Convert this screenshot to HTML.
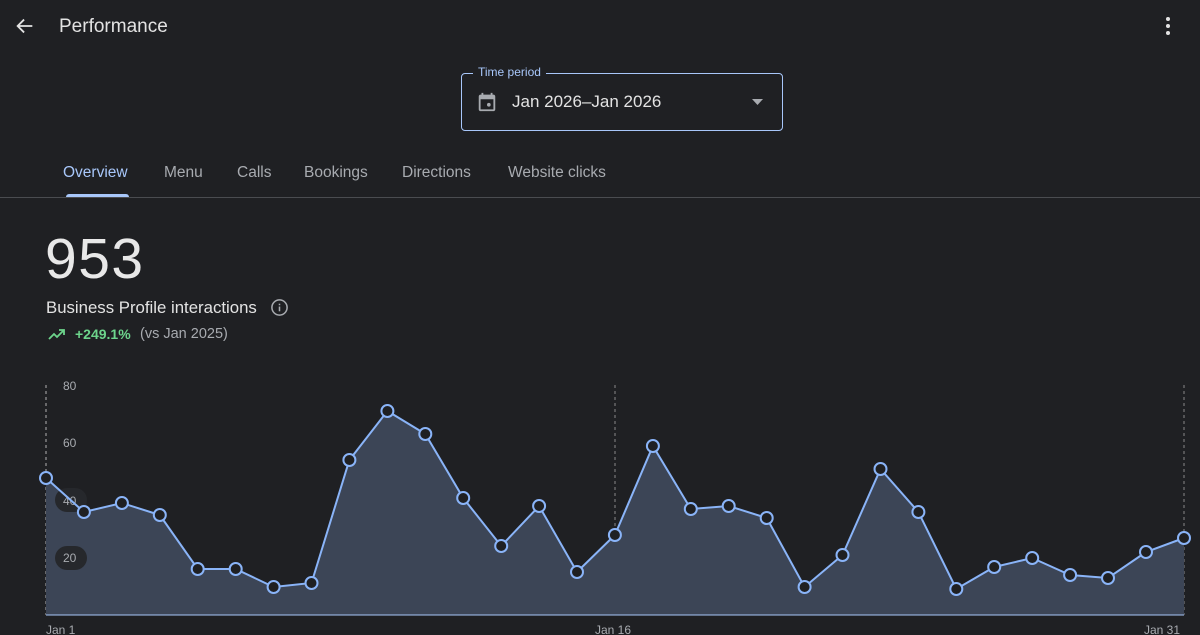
<!DOCTYPE html>
<html><head><meta charset="utf-8"><style>
*{margin:0;padding:0;box-sizing:border-box}
body{width:1200px;height:635px;overflow:hidden;background:#1f2023;font-family:"Liberation Sans",Arial,sans-serif;color:#e3e3e3;position:relative}
.abs{position:absolute}
.tab{position:absolute;top:164px;font-size:15.5px;color:#a8abb0}
</style></head><body>
<svg class="abs" style="left:14px;top:15px" width="22" height="22" viewBox="0 0 24 24"><path d="M20 12H5M11 5l-7 7 7 7" stroke="#e3e3e3" stroke-width="2" fill="none"/></svg>
<div class="abs" style="left:59px;top:16px;font-size:19px;color:#e3e3e3">Performance</div>
<svg class="abs" style="left:1158px;top:15px" width="20" height="22" viewBox="0 0 20 22"><circle cx="10" cy="4" r="2" fill="#e3e3e3"/><circle cx="10" cy="11" r="2" fill="#e3e3e3"/><circle cx="10" cy="18" r="2" fill="#e3e3e3"/></svg>

<div class="abs" style="left:461px;top:73px;width:322px;height:58px;border:1px solid #a8c7fa;border-radius:4px"></div>
<div class="abs" style="left:473px;top:65px;padding:0 5px;background:#1f2023;font-size:12px;color:#a8c7fa">Time period</div>
<svg class="abs" style="left:476px;top:91px" width="22" height="22" viewBox="0 0 24 24"><path d="M19 4h-1V2h-2v2H8V2H6v2H5c-1.1 0-2 .9-2 2v14c0 1.1.9 2 2 2h14c1.1 0 2-.9 2-2V6c0-1.1-.9-2-2-2zm0 16H5V9h14v11z" fill="#a8abb0"/><rect x="12" y="13" width="4" height="4" rx="2" fill="#a8abb0"/></svg>
<div class="abs" style="left:512px;top:92px;font-size:17px;color:#e3e3e3">Jan 2026–Jan 2026</div>
<svg class="abs" style="left:751px;top:98px" width="14" height="8"><path d="M1 1h11L6.5 7z" fill="#a8abb0"/></svg>

<div class="tab" style="left:63px;color:#a8c7fa">Overview</div>
<div class="tab" style="left:164px">Menu</div>
<div class="tab" style="left:237px">Calls</div>
<div class="tab" style="left:304px">Bookings</div>
<div class="tab" style="left:402px">Directions</div>
<div class="tab" style="left:508px">Website clicks</div>
<div class="abs" style="left:66px;top:194px;width:63px;height:3px;background:#a8c7fa;border-radius:3px 3px 0 0"></div>
<div class="abs" style="left:0;top:197px;width:1200px;height:1px;background:#4a4c50"></div>

<div class="abs" style="left:45px;top:226px;font-size:57px;font-weight:300;color:#e8e8e8;letter-spacing:1.5px">953</div>
<div class="abs" style="left:46px;top:298px;font-size:16.8px;color:#e3e3e3">Business Profile interactions</div>
<svg class="abs" style="left:270px;top:298px" width="19" height="19" viewBox="0 0 20 20"><circle cx="10" cy="10" r="8" stroke="#a8abb0" stroke-width="1.6" fill="none"/><rect x="9.2" y="9" width="1.6" height="5" fill="#a8abb0"/><rect x="9.2" y="6" width="1.6" height="1.6" fill="#a8abb0"/></svg>
<svg class="abs" style="left:48px;top:327px" width="18" height="14" viewBox="0 0 18 14"><path d="M1 12l5-5 3 3 6-6M11 3h5v5" stroke="#6dd58c" stroke-width="1.8" fill="none"/></svg>
<div class="abs" style="left:75px;top:326px;font-size:14px;color:#6dd58c;font-weight:bold">+249.1%</div>
<div class="abs" style="left:140px;top:326px;font-size:14.5px;color:#a8abb0">(vs Jan 2025)</div>

<svg class="abs" style="left:0;top:0" width="1200" height="635">
<line x1="46" y1="385" x2="46" y2="615" stroke="#b0b0b0" stroke-dasharray="3,3" stroke-width="1"/>
<line x1="615" y1="385" x2="615" y2="615" stroke="#888" stroke-dasharray="3,3" stroke-width="1"/>
<line x1="1184" y1="385" x2="1184" y2="615" stroke="#888" stroke-dasharray="3,3" stroke-width="1"/>
<polygon fill="#3c4556" points="46,615 46,478 83.9,512 121.9,503 159.8,515 197.7,569 235.7,569 273.6,587 311.5,583 349.4,460 387.4,411 425.3,434 463.2,498 501.2,546 539.1,506 577,572 614.9,535 652.9,446 690.8,509 728.7,506 766.7,518 804.6,587 842.5,555 880.5,469 918.4,512 956.3,589 994.2,567 1032.2,558 1070.1,575 1108,578 1146,552 1184,538 1184,615"/>
<line x1="46" y1="615" x2="1184" y2="615" stroke="#a8c7fa" stroke-width="1"/>
<rect x="55" y="488" width="32" height="24" rx="12" fill="#26282c"/>
<rect x="55" y="546" width="32" height="24" rx="12" fill="#26282c"/>
<g font-size="12" fill="#a8abb0" font-family="Liberation Sans,sans-serif">
<text x="63" y="390">80</text><text x="63" y="447">60</text><text x="63" y="505">40</text><text x="63" y="562">20</text>
<text x="46" y="634">Jan 1</text><text x="595" y="634">Jan 16</text><text x="1144" y="634">Jan 31</text>
</g>
<polyline fill="none" stroke="#8ab4f8" stroke-width="2" points="46,478 83.9,512 121.9,503 159.8,515 197.7,569 235.7,569 273.6,587 311.5,583 349.4,460 387.4,411 425.3,434 463.2,498 501.2,546 539.1,506 577,572 614.9,535 652.9,446 690.8,509 728.7,506 766.7,518 804.6,587 842.5,555 880.5,469 918.4,512 956.3,589 994.2,567 1032.2,558 1070.1,575 1108,578 1146,552 1184,538"/>
<g fill="#1f2023" stroke="#8ab4f8" stroke-width="2">
<circle cx="46" cy="478" r="6"/><circle cx="83.9" cy="512" r="6"/><circle cx="121.9" cy="503" r="6"/><circle cx="159.8" cy="515" r="6"/><circle cx="197.7" cy="569" r="6"/><circle cx="235.7" cy="569" r="6"/><circle cx="273.6" cy="587" r="6"/><circle cx="311.5" cy="583" r="6"/><circle cx="349.4" cy="460" r="6"/><circle cx="387.4" cy="411" r="6"/><circle cx="425.3" cy="434" r="6"/><circle cx="463.2" cy="498" r="6"/><circle cx="501.2" cy="546" r="6"/><circle cx="539.1" cy="506" r="6"/><circle cx="577" cy="572" r="6"/><circle cx="614.9" cy="535" r="6"/><circle cx="652.9" cy="446" r="6"/><circle cx="690.8" cy="509" r="6"/><circle cx="728.7" cy="506" r="6"/><circle cx="766.7" cy="518" r="6"/><circle cx="804.6" cy="587" r="6"/><circle cx="842.5" cy="555" r="6"/><circle cx="880.5" cy="469" r="6"/><circle cx="918.4" cy="512" r="6"/><circle cx="956.3" cy="589" r="6"/><circle cx="994.2" cy="567" r="6"/><circle cx="1032.2" cy="558" r="6"/><circle cx="1070.1" cy="575" r="6"/><circle cx="1108" cy="578" r="6"/><circle cx="1146" cy="552" r="6"/><circle cx="1184" cy="538" r="6"/>
</g>
</svg>
</body></html>
